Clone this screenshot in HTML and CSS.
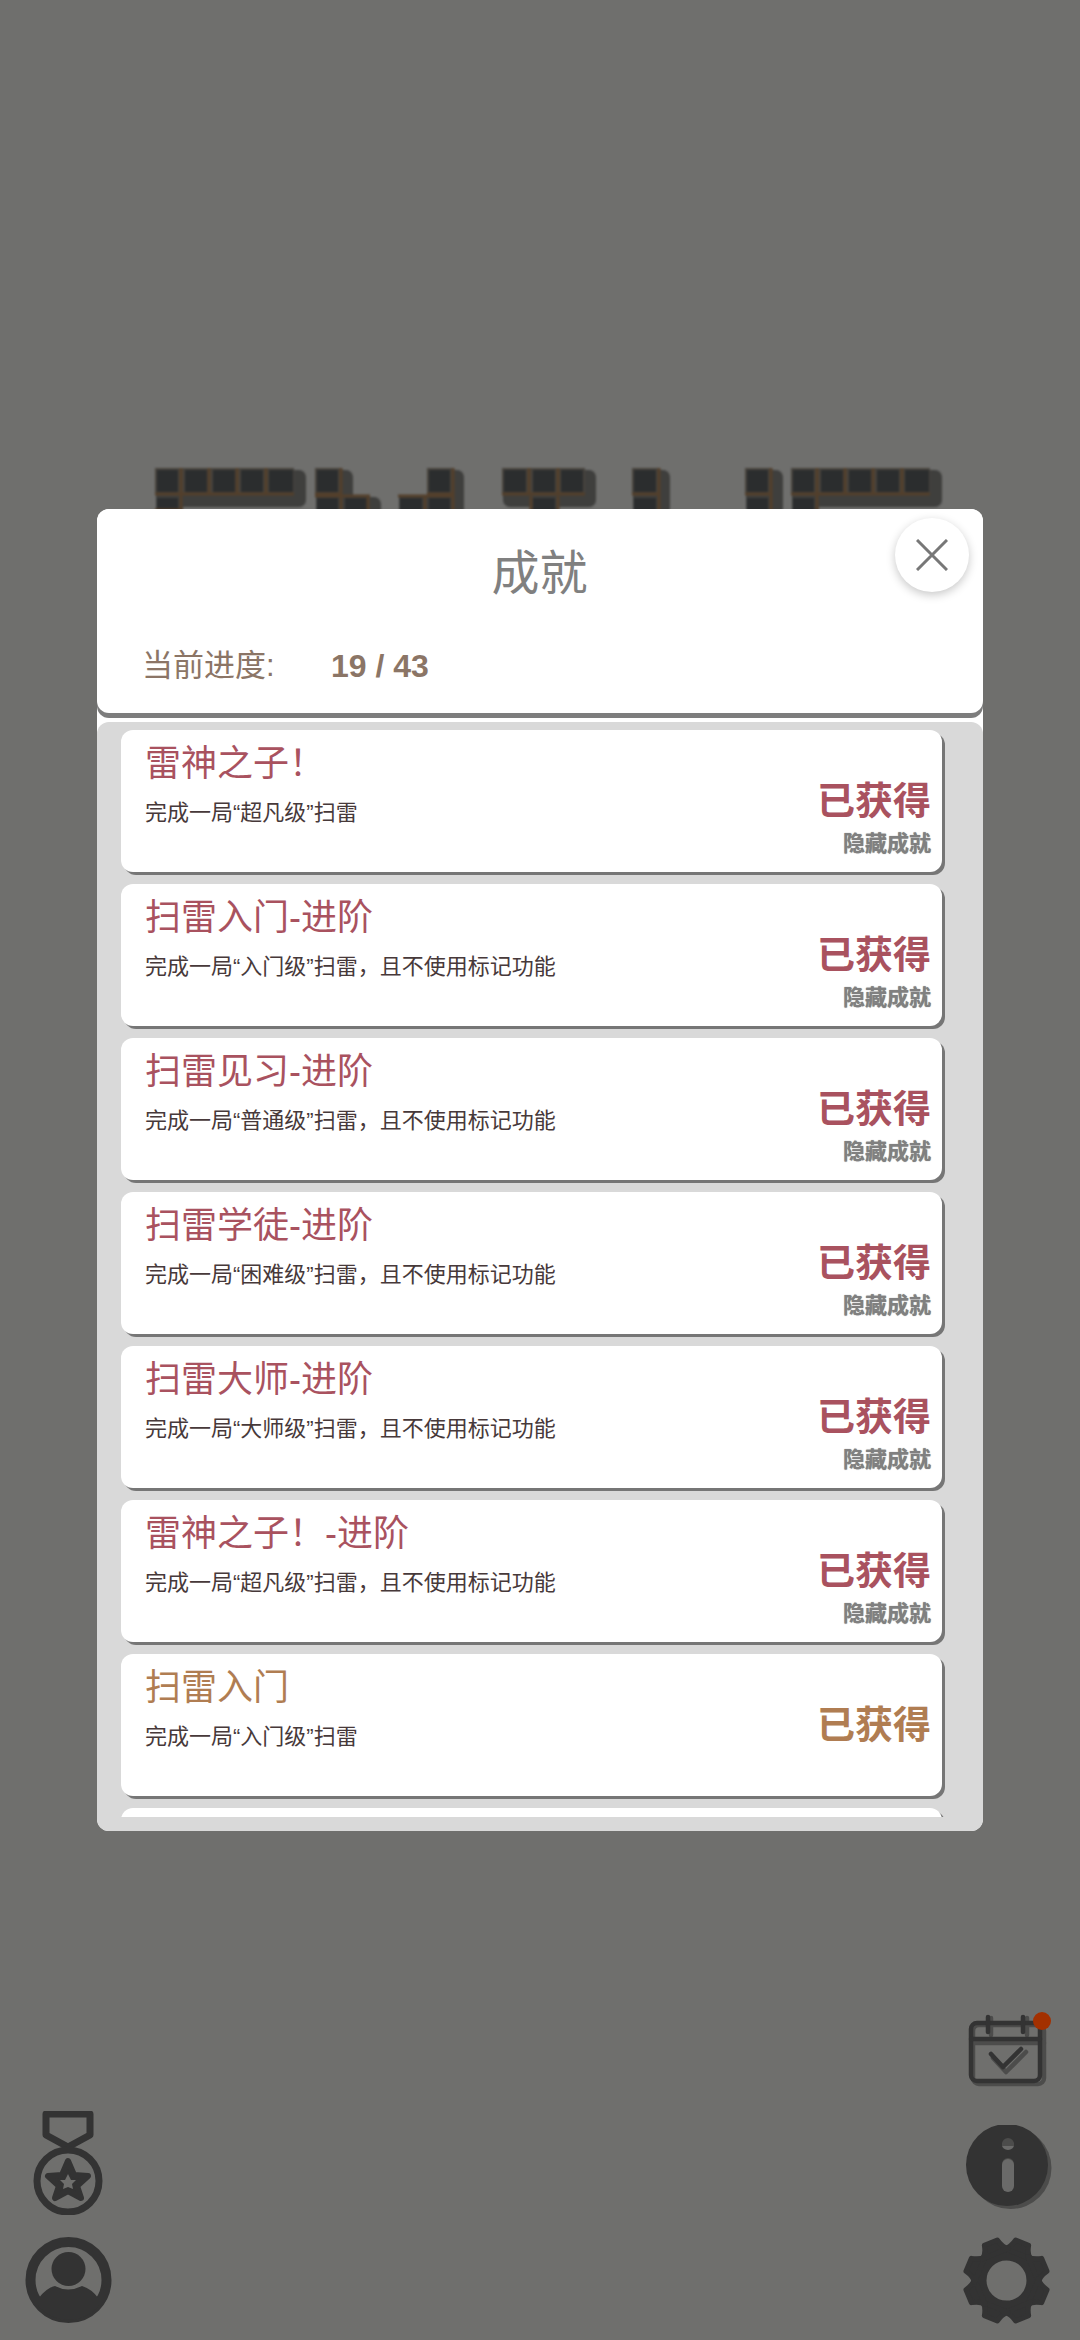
FILE: index.html
```html
<!DOCTYPE html>
<html lang="zh-CN">
<head>
<meta charset="utf-8">
<title>成就</title>
<link rel="stylesheet" href="styles.css">
</head>
<body>
<div class="page">
  <svg class="logo" width="1080" height="60" viewBox="0 460 1080 60">
    <g class="blk-shadow">
      <rect x="156" y="470" width="150" height="37" rx="7"/><rect x="156" y="495" width="27" height="20"/>
      <rect x="316" y="470" width="37" height="40" rx="7"/><rect x="316" y="497" width="65" height="20" rx="7"/>
      <rect x="428" y="470" width="36" height="45" rx="7"/><rect x="399" y="497" width="65" height="20"/>
      <rect x="503" y="470" width="93" height="37" rx="7"/><rect x="531" y="495" width="27" height="20"/>
      <rect x="633" y="470" width="37" height="45" rx="7"/><rect x="746" y="470" width="37" height="45" rx="7"/>
      <rect x="792" y="470" width="150" height="37" rx="7"/><rect x="792" y="495" width="27" height="20"/>
    </g>
    <g class="blk-base">
      <rect x="155" y="468" width="139" height="26"/><rect x="315" y="468" width="26" height="26"/><rect x="427" y="468" width="26" height="26"/>
      <rect x="502" y="468" width="83" height="26"/><rect x="632" y="468" width="27" height="26"/><rect x="745" y="468" width="26" height="26"/><rect x="791" y="468" width="139" height="26"/>
    </g>
    <g class="blk-cell">
      <rect x="157" y="470" width="21" height="22"/><rect x="185" y="470" width="22" height="22"/><rect x="213" y="470" width="22" height="22"/><rect x="241" y="470" width="22" height="22"/><rect x="269" y="470" width="24" height="22"/><rect x="157" y="498" width="21" height="14"/>
      <rect x="317" y="470" width="21" height="22"/><rect x="317" y="498" width="21" height="14"/><rect x="345" y="498" width="22" height="14"/>
      <rect x="429" y="470" width="21" height="22"/><rect x="400" y="498" width="22" height="14"/><rect x="429" y="498" width="21" height="14"/>
      <rect x="504" y="470" width="22" height="22"/><rect x="533" y="470" width="22" height="22"/><rect x="561" y="470" width="22" height="22"/><rect x="533" y="498" width="22" height="14"/>
      <rect x="634" y="470" width="22" height="22"/><rect x="634" y="498" width="22" height="14"/>
      <rect x="747" y="470" width="21" height="22"/><rect x="747" y="498" width="21" height="14"/>
      <rect x="793" y="470" width="21" height="22"/><rect x="821" y="470" width="22" height="22"/><rect x="849" y="470" width="22" height="22"/><rect x="877" y="470" width="22" height="22"/><rect x="905" y="470" width="24" height="22"/><rect x="793" y="498" width="21" height="14"/>
    </g>
    <path class="blk-lines" d="M181 468V512M209 468V494M237 468V494M266 468V494M155 494H294M155 510H181
      M341 468V512M368 496V512M315 494H341M315 496H370
      M425 496V512M453 468V512M427 494H453M398 496H453
      M529 468V494M558 468V494M502 494H585M531 496V512M558 496V512
      M659 468V512M632 494H659
      M771 468V512M745 494H771
      M817 468V512M845 468V494M873 468V494M902 468V494M791 494H930"/>
  </svg>

  <div class="toolbar">
    <div class="tool-col tool-left">
      <svg class="ico-medal" width="87" height="104" viewBox="25 2112 87 104">
        <path class="line" d="M46 2115H90V2136L68 2148L46 2136Z"/>
        <circle class="line" cx="68" cy="2182" r="31"/>
        <path class="star" d="M68 2162L74 2176L88 2177L77 2187L81 2199L68 2192L55 2199L59 2187L48 2177L62 2176Z"/>
        <path class="star-in" d="M68 2175L71 2181L76 2181L72 2185L73 2190L68 2188L63 2190L64 2185L60 2181L65 2181Z"/>
      </svg>
      <svg class="ico-user" width="87" height="87" viewBox="25 2238 87 87">
        <defs><clipPath id="userclip"><circle cx="68.500" cy="2281" r="40"/></clipPath></defs>
        <circle class="ring" cx="68.500" cy="2281" r="38"/>
        <circle class="solid" cx="68.500" cy="2270" r="17"/>
        <path class="solid" clip-path="url(#userclip)" d="M38 2300Q46 2289 55 2287Q68 2294 82 2287Q92 2290 99 2300V2330H38Z"/>
      </svg>
    </div>
    <div class="tool-col tool-right">
      <svg class="ico-cal" width="90" height="78" viewBox="963 2010 90 78">
        <g class="shade">
          <rect x="973" y="2023" width="71" height="59" rx="6"/>
          <path d="M973 2041H1044M991 2016V2033M1027 2016V2033M993 2056L1006 2070L1026 2050"/>
        </g>
        <g class="cal-line">
          <rect x="971" y="2021" width="69" height="58" rx="6"/>
          <path d="M971 2037H1040M988 2015V2030M1023 2015V2030M991 2052L1003 2065L1021 2047"/>
        </g>
        <circle class="dot" cx="1042" cy="2019" r="9"/>
      </svg>
      <svg class="ico-info" width="90" height="84" viewBox="963 2123 90 84">
        <circle class="shade-fill" cx="1010.500" cy="2166" r="41"/>
        <circle class="solid" cx="1007" cy="2163" r="41"/>
        <ellipse class="i-hole" cx="1008" cy="2143" rx="6" ry="5"/>
        <path class="i-shade" d="M1002 2142a6 6 0 0 1 12 0v2h-12zM1002 2162a6 6 0 0 1 12 0v2h-12z"/>
        <rect class="i-hole" x="1002" y="2157" width="12" height="33" rx="6"/>
      </svg>
      <svg class="ico-gear" width="90" height="87" viewBox="963 2235 90 87">
        <g transform="translate(1006.500 2278.500)">
          <circle class="gear-ring" r="26.500"/>
          <path class="tooth" transform="rotate(22.500)" d="M-14 -29Q-9 -32 -7 -41H7Q9 -32 14 -29Z"/>
          <path class="tooth" transform="rotate(67.500)" d="M-14 -29Q-9 -32 -7 -41H7Q9 -32 14 -29Z"/>
          <path class="tooth" transform="rotate(112.500)" d="M-14 -29Q-9 -32 -7 -41H7Q9 -32 14 -29Z"/>
          <path class="tooth" transform="rotate(157.500)" d="M-14 -29Q-9 -32 -7 -41H7Q9 -32 14 -29Z"/>
          <path class="tooth" transform="rotate(202.500)" d="M-14 -29Q-9 -32 -7 -41H7Q9 -32 14 -29Z"/>
          <path class="tooth" transform="rotate(247.500)" d="M-14 -29Q-9 -32 -7 -41H7Q9 -32 14 -29Z"/>
          <path class="tooth" transform="rotate(292.500)" d="M-14 -29Q-9 -32 -7 -41H7Q9 -32 14 -29Z"/>
          <path class="tooth" transform="rotate(337.500)" d="M-14 -29Q-9 -32 -7 -41H7Q9 -32 14 -29Z"/>
        </g>
      </svg>
    </div>
  </div>

  <section class="modal">
    <header class="modal-head">
      <h1 class="modal-title">成就</h1>
      <p class="progress"><span class="progress-label">当前进度:</span><span class="progress-value">19 / 43</span></p>
    </header>
    <button class="close" aria-label="关闭">
      <svg width="32" height="32" viewBox="0 0 32 32"><path d="M1 1L31 31M31 1L1 31"/></svg>
    </button>
    <div class="list">
      <div class="scroller">
        <article class="card epic">
          <div class="card-main"><h2 class="card-title">雷神之子！</h2><p class="card-desc">完成一局“超凡级”扫雷</p></div>
          <div class="card-side"><div class="state">已获得</div><div class="tag">隐藏成就</div></div>
        </article>
        <article class="card epic">
          <div class="card-main"><h2 class="card-title">扫雷入门-进阶</h2><p class="card-desc">完成一局“入门级”扫雷，且不使用标记功能</p></div>
          <div class="card-side"><div class="state">已获得</div><div class="tag">隐藏成就</div></div>
        </article>
        <article class="card epic">
          <div class="card-main"><h2 class="card-title">扫雷见习-进阶</h2><p class="card-desc">完成一局“普通级”扫雷，且不使用标记功能</p></div>
          <div class="card-side"><div class="state">已获得</div><div class="tag">隐藏成就</div></div>
        </article>
        <article class="card epic">
          <div class="card-main"><h2 class="card-title">扫雷学徒-进阶</h2><p class="card-desc">完成一局“困难级”扫雷，且不使用标记功能</p></div>
          <div class="card-side"><div class="state">已获得</div><div class="tag">隐藏成就</div></div>
        </article>
        <article class="card epic">
          <div class="card-main"><h2 class="card-title">扫雷大师-进阶</h2><p class="card-desc">完成一局“大师级”扫雷，且不使用标记功能</p></div>
          <div class="card-side"><div class="state">已获得</div><div class="tag">隐藏成就</div></div>
        </article>
        <article class="card epic">
          <div class="card-main"><h2 class="card-title">雷神之子！-进阶</h2><p class="card-desc">完成一局“超凡级”扫雷，且不使用标记功能</p></div>
          <div class="card-side"><div class="state">已获得</div><div class="tag">隐藏成就</div></div>
        </article>
        <article class="card gold">
          <div class="card-main"><h2 class="card-title">扫雷入门</h2><p class="card-desc">完成一局“入门级”扫雷</p></div>
          <div class="card-side"><div class="state">已获得</div></div>
        </article>
        <article class="card gold"></article>
      </div>
    </div>
  </section>
</div>
</body>
</html>
```
FILE: styles.css
```css
* { box-sizing: border-box; }
html, body { margin: 0; padding: 0; }
body {
  font-family: "Liberation Sans", "Noto Sans CJK SC", sans-serif;
  background: #6f6f6d;
}
.page {
  position: relative;
  width: 1080px;
  height: 2340px;
  display: flex;
  flex-direction: column;
  overflow: hidden;
}
.logo { display: block; margin-top: 460px; filter: blur(0.8px); }
.blk-shadow rect { fill: #3f3f3d; }
.blk-base rect { fill: #47433d; }
.blk-cell rect { fill: #2b2d2e; }
.blk-lines { fill: none; stroke: #533f2b; stroke-width: 3; }

.toolbar {
  margin-top: auto;
  padding: 0 27px 16px 25px;
  display: flex;
  justify-content: space-between;
  align-items: flex-end;
}
.tool-col { display: flex; flex-direction: column; }
.tool-left { gap: 22px; }
.tool-col svg { display: block; }
.ico-cal { margin-bottom: 35px; }
.ico-info { margin-bottom: 28px; }
.line { fill: none; stroke: #333; stroke-width: 7; stroke-linejoin: round; }
.star { fill: #333; stroke: #333; stroke-width: 6; stroke-linejoin: round; }
.star-in { fill: #6f6f6d; }
.ring { fill: none; stroke: #333; stroke-width: 10; }
.solid { fill: #333; }
.shade rect, .shade path { fill: none; stroke: #4c4c4b; stroke-width: 4.5; stroke-linecap: round; stroke-linejoin: round; }
.cal-line rect, .cal-line path { fill: none; stroke: #333; stroke-width: 4.5; stroke-linecap: round; stroke-linejoin: round; }
.dot { fill: #a33000; }
.shade-fill { fill: #4c4c4b; }
.i-hole { fill: #6a6a69; }
.i-shade { fill: #4c4c4b; }
.gear-ring { fill: none; stroke: #333; stroke-width: 13; }
.tooth { fill: #333; stroke: #333; stroke-width: 5; stroke-linejoin: round; }

.modal {
  position: absolute;
  left: 97px;
  top: 509px;
  width: 886px;
  height: 1322px;
  background: #fff;
  border-radius: 12px;
  display: flex;
  flex-direction: column;
}
.modal-head {
  position: relative;
  height: 204px;
  flex: none;
  padding: 34px 46px 0 45px;
  border-radius: 12px;
  background: #fff;
  box-shadow: 0 5px 0 #7d7d7d;
}
.modal-title {
  margin: 0;
  font-size: 48px;
  line-height: 62px;
  font-weight: 400;
  text-align: center;
  color: #808080;
}
.progress {
  margin: 38px 0 0;
  display: flex;
  align-items: center;
  font-size: 32px;
  line-height: 46px;
  color: #8b7566;
}
.progress-label { width: 189px; font-size: 31px; }
.progress-value { font-weight: 700; }
.close {
  position: absolute;
  left: 798px;
  top: 9px;
  width: 74px;
  height: 74px;
  padding: 0;
  border: 0;
  border-radius: 50%;
  background: #fff;
  box-shadow: 0 3px 10px rgba(0, 0, 0, 0.22);
  display: flex;
  align-items: center;
  justify-content: center;
}
.close svg { display: block; }
.close path { fill: none; stroke: #777; stroke-width: 3; }
.list {
  flex: none;
  height: 1109px;
  margin-top: 9px;
  padding-bottom: 14px;
  background: #d9d9d9;
  border-radius: 12px;
}
.scroller {
  height: 100%;
  overflow: hidden;
  padding: 8px 0 0 24px;
  display: flex;
  flex-direction: column;
  gap: 12px;
}
.card {
  flex: none;
  width: 821px;
  height: 142px;
  padding: 16px 11px 0 24px;
  background: #fff;
  border-radius: 12px;
  box-shadow: 3px 3px 0 #767676;
  display: flex;
  justify-content: space-between;
}
.card-title {
  margin: 0;
  font-size: 36px;
  line-height: 36px;
  font-weight: 400;
}
.card-desc {
  margin: 16px 0 0;
  font-size: 22px;
  line-height: 30px;
  color: #47393a;
}
.card-side {
  padding-top: 35px;
  display: flex;
  flex-direction: column;
  align-items: flex-end;
}
.state { font-size: 38px; line-height: 40px; font-weight: 700; }
.tag {
  margin-top: 10px;
  font-size: 22px;
  line-height: 26px;
  font-weight: 700;
  color: #808080;
  text-shadow: 0 0 1px #808080;
}
.epic .card-title, .epic .state { color: #a9525f; }
.gold .card-title, .gold .state { color: #b07d52; }
```
